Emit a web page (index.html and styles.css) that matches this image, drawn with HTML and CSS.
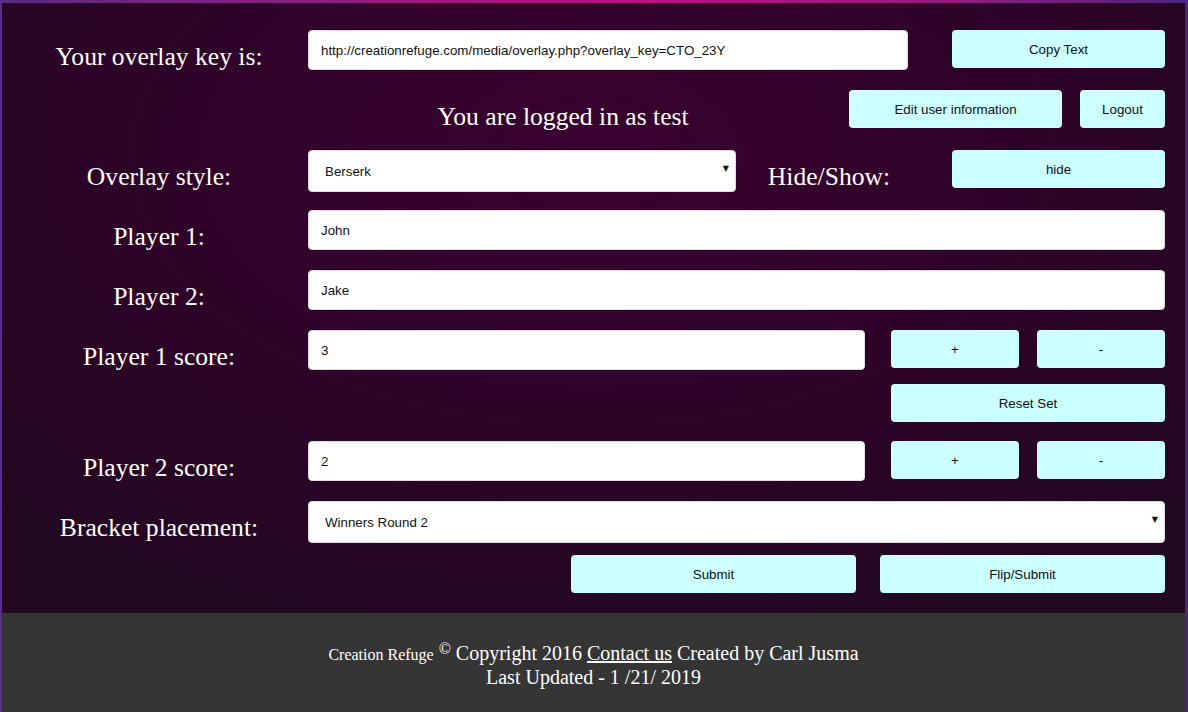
FILE: index.html
```html
<!DOCTYPE html>
<html lang="en">
<head>
<meta charset="utf-8">
<title>Overlay control</title>
<link rel="stylesheet" href="styles.css">
</head>
<body>
<div class="frame">
  <main class="panel">
    <div class="row">
      <div class="label">Your overlay key is:</div>
      <input class="field field-key" type="text" value="http://creationrefuge.com/media/overlay.php?overlay_key=CTO_23Y">
      <button class="btn btn-wide push">Copy Text</button>
    </div>

    <div class="row">
      <div class="spacer"></div>
      <div class="label status">You are logged in as test</div>
      <button class="btn btn-wide push">Edit user information</button>
      <button class="btn btn-logout">Logout</button>
    </div>

    <div class="row">
      <div class="label">Overlay style:</div>
      <div class="select-wrap select-style">
        <select class="field select"><option>Berserk</option></select>
      </div>
      <div class="label label-hide">Hide/Show:</div>
      <button class="btn btn-wide push">hide</button>
    </div>

    <div class="row">
      <div class="label">Player 1:</div>
      <input class="field grow" type="text" value="John">
    </div>

    <div class="row">
      <div class="label">Player 2:</div>
      <input class="field grow" type="text" value="Jake">
    </div>

    <div class="row row-short">
      <div class="label">Player 1 score:</div>
      <input class="field field-score" type="text" value="3">
      <button class="btn btn-small push">+</button>
      <button class="btn btn-small btn-gap">-</button>
    </div>

    <div class="row row-mid">
      <button class="btn btn-reset push">Reset Set</button>
    </div>

    <div class="row">
      <div class="label">Player 2 score:</div>
      <input class="field field-score" type="text" value="2">
      <button class="btn btn-small push">+</button>
      <button class="btn btn-small btn-gap">-</button>
    </div>

    <div class="row row-short">
      <div class="label">Bracket placement:</div>
      <div class="select-wrap grow">
        <select class="field select"><option>Winners Round 2</option></select>
      </div>
    </div>

    <div class="row row-last">
      <button class="btn btn-submit push">Submit</button>
      <button class="btn btn-submit btn-gap-lg">Flip/Submit</button>
    </div>
  </main>

  <footer class="footer">
    <div class="footer-line"><span class="brand">Creation Refuge</span> <sup class="copy">©</sup> Copyright 2016 <a class="contact" href="#">Contact us</a> Created by Carl Jusma</div>
    <div class="footer-line">Last Updated - 1 /21/ 2019</div>
  </footer>
</div>
</body>
</html>
```
FILE: styles.css
```css
* { box-sizing: border-box; }

html, body {
  margin: 0;
  padding: 0;
  height: 100%;
}

body {
  background: linear-gradient(90deg, #582b8d 0%, #a3187f 35%, #b3147e 55%, #9a1a80 80%, #4a2386 100%);
  font-family: "Liberation Serif", "Times New Roman", serif;
  color: #ffffff;
}

.frame {
  margin: 3px 3px 0 2px;
  min-height: calc(100% - 3px);
  display: flex;
  flex-direction: column;
}

.panel {
  background: radial-gradient(ellipse 70% 80% at 50% 25%, #3a0130 0%, #2f0329 50%, #230822 100%);
  padding: 27px 20px 20px 8px;
}

.row {
  display: flex;
  align-items: flex-start;
  height: 60px;
}

.row-short { height: 54px; }
.row-mid { height: 57px; }
.row-last { height: 38px; }

.label {
  width: 298px;
  flex: none;
  text-align: center;
  font-size: 25.6px;
  line-height: 30px;
  padding-top: 12px;
  color: #ffffff;
}

.spacer { width: 298px; flex: none; }

.label.status { width: 510px; }
.label.label-hide { width: 186px; }

.field {
  height: 40px;
  border: 1px solid #ddd;
  border-radius: 4px;
  background: #ffffff;
  font-family: "Liberation Sans", Arial, sans-serif;
  font-size: 13.333px;
  color: #111;
  padding: 0 12px;
  outline: none;
  flex: none;
}

.field-key { width: 600px; }
.field-score { width: 557px; }
.grow { flex: 1; width: auto; }

.select-wrap {
  position: relative;
  flex: none;
  height: 42px;
}
.select-wrap.grow { flex: 1; }
.select-style { width: 428px; }

.select {
  width: 100%;
  height: 42px;
  appearance: none;
  -webkit-appearance: none;
  padding-left: 16px;
}

.select-wrap::after {
  content: "▼";
  position: absolute;
  right: 7px;
  top: 14px;
  font-family: "DejaVu Sans", sans-serif;
  font-size: 8px;
  color: #111;
  pointer-events: none;
}

.btn {
  flex: none;
  height: 38px;
  border: none;
  border-radius: 4px;
  background: #ccffff;
  font-family: "Liberation Sans", Arial, sans-serif;
  font-size: 13.333px;
  color: #111;
  padding: 0;
  cursor: pointer;
}

.push { margin-left: auto; }

.btn-wide { width: 213px; }
.btn-logout { width: 85px; margin-left: 18px; }
.btn-small { width: 128px; }
.btn-gap { margin-left: 18px; }
.btn-reset { width: 274px; }
.btn-submit { width: 285px; }
.btn-gap-lg { margin-left: 24px; }

.footer {
  flex: 1;
  background: #353535;
  padding: 29px 0 20px;
  text-align: center;
  font-size: 20px;
  line-height: 22px;
  color: #ffffff;
}

.brand { font-size: 16px; }

.copy {
  font-size: 16px;
  line-height: 0;
  vertical-align: 6px;
}

.contact {
  color: #ffffff;
  text-decoration: underline;
}
```
